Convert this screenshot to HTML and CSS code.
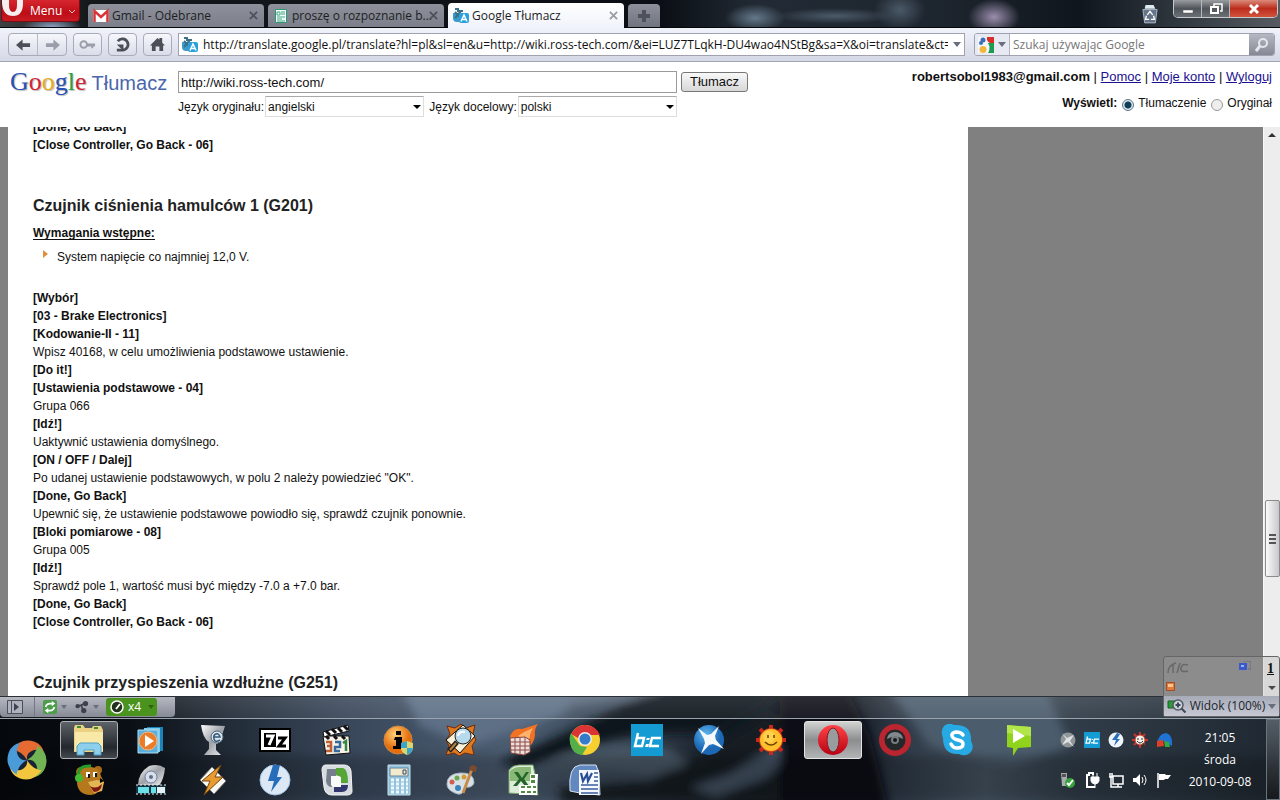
FILE: index.html
```html
<!DOCTYPE html>
<html lang="pl">
<head>
<meta charset="utf-8">
<title>Google Tłumacz</title>
<link rel="stylesheet" href="styles.css">
</head>
<body>
<svg class="defs" width="0" height="0" aria-hidden="true">
  <defs>
    <symbol id="translate" viewBox="0 0 16 16"><path d="M0 5h11v9H4a4 4 0 0 1-4-4z" fill="#3a9cc8"/><path d="M2 1h3v2h5M2 4l5 5M8 3L2 10" stroke="#3c7088" stroke-width="2" fill="none"/><rect x="6" y="5" width="10" height="10" rx="2" fill="#2aa0de"/><path d="M8 13.500 11 7l3 6.500M9 11.500h4" stroke="#fff" stroke-width="1.500" fill="none"/></symbol>
    <symbol id="close" viewBox="0 0 10 10"><path d="M1 1l8 8M9 1l-8 8" stroke="currentColor" stroke-width="2" fill="none"/></symbol>
    <symbol id="bc" viewBox="0 0 32 32"><path fill="#159bd3" d="M0 0h32v32H0z"/><path d="M7 9L4 22h7l2-8H6M30 14h-9l-2 8h9" fill="none" stroke="#fff" stroke-width="2.500"/><path d="M16 14h3l-1 2h-3zM15 20h3l-1 3h-3z" fill="#fff"/></symbol>
    <radialGradient id="orange" cx=".4" cy=".3"><stop offset="0" stop-color="#ffd37a"/><stop offset="1" stop-color="#e66d0c"/></radialGradient>
    <radialGradient id="ball" cx=".4" cy=".3"><stop offset="0" stop-color="#5db4ee"/><stop offset="1" stop-color="#1c68b4"/></radialGradient>
    <linearGradient id="red" x2="0" y2="1"><stop offset="0" stop-color="#ff4548"/><stop offset="1" stop-color="#b80012"/></linearGradient>
    <linearGradient id="silver" x2="1" y2="1"><stop offset="0" stop-color="#fff"/><stop offset=".5" stop-color="#9da2a8"/><stop offset="1" stop-color="#f4f4f4"/></linearGradient>
    <linearGradient id="sky"><stop offset="0" stop-color="#05080c"/><stop offset=".1" stop-color="#0a0f15"/><stop offset=".18" stop-color="#222c38"/><stop offset=".27" stop-color="#39475a"/><stop offset=".4" stop-color="#4b5c70"/><stop offset=".5" stop-color="#34414f"/><stop offset=".57" stop-color="#141a22"/><stop offset=".66" stop-color="#10151b"/><stop offset=".7" stop-color="#2d3845"/><stop offset=".77" stop-color="#44525f"/><stop offset=".84" stop-color="#303c48"/><stop offset="1" stop-color="#1f2831"/></linearGradient>
    <filter id="soft" x="-10%" y="-50%" width="120%" height="200%"><feGaussianBlur stdDeviation="5"/></filter>
  </defs>
</svg>

<header class="titlebar">
  <button class="menu"><svg class="menu-o" viewBox="0 0 22 16"><path d="M0 0h7v5q0 7 4 7t4-7V0h6v3q0 13-10 13T0 3z" fill="#f4eeee"/></svg>Menu<svg class="chev" viewBox="0 0 8 5"><path d="M1 1l3 3 3-3" fill="none" stroke="#f5c5c7"/></svg></button>
  <nav class="tabs">
    <div class="tab"><svg class="ic16" viewBox="0 0 16 16"><path fill="#fff" d="M0 2h16v12H0z"/><path d="M1.500 14V3L8 9l6.500-6v11" fill="none" stroke="#d8353a" stroke-width="2.500"/></svg><span>Gmail - Odebrane</span><button aria-label="Zamknij kartę"><svg viewBox="0 0 10 10"><use href="#close"/></svg></button></div>
    <div class="tab"><svg class="ic16" viewBox="0 0 16 16"><path fill="#f5fff9" stroke="#2e9575" d="M2.500 1.500h11v13h-11z"/><path d="M4 4h3v3H4zM8 4h4M8 6h4M4 9h8M4 11h5M4 13h8" fill="none" stroke="#3ba483"/></svg><span>proszę o rozpoznanie b...</span><button aria-label="Zamknij kartę"><svg viewBox="0 0 10 10"><use href="#close"/></svg></button></div>
    <div class="tab active"><svg class="ic16"><use href="#translate"/></svg><span>Google Tłumacz</span><button aria-label="Zamknij kartę"><svg viewBox="0 0 10 10"><use href="#close"/></svg></button></div>
    <button class="newtab" aria-label="Nowa karta"><svg viewBox="0 0 12 12"><path d="M4 0h4v4h4v4H8v4H4V8H0V4h4z" fill="#4d525c"/></svg></button>
  </nav>
  <button class="trash" aria-label="Zamknięte karty"><svg viewBox="0 0 18 22"><path d="M4 1h9l2 4H3z" fill="#dcebf0"/><path d="M1 6h16l-2 15H3z" fill="#66748a" stroke="#b4c0d0"/><path d="M6 12l3-4 3 4M13 13l1 4h-4M8 17H4l1-4" fill="none" stroke="#fff" stroke-width="1.500"/></svg></button>
  <div class="winbtns">
    <button aria-label="Minimalizuj"><svg viewBox="0 0 14 12"><path d="M2 7h10v3H2z" fill="#fff" stroke="#50555b" stroke-width=".5"/></svg></button>
    <button aria-label="Przywróć"><svg viewBox="0 0 14 12"><path d="M5 3V1h8v7h-2" fill="none" stroke="#fff" stroke-width="1.500"/><path d="M2 4h7v6H2z" fill="none" stroke="#fff" stroke-width="2"/></svg></button>
    <button class="x" aria-label="Zamknij"><svg viewBox="0 0 14 12"><path d="M3 2l8 8M11 2l-8 8" stroke="#fff" stroke-width="3"/></svg></button>
  </div>
</header>

<div class="toolbar">
  <div class="pair"><button aria-label="Wstecz"><svg viewBox="0 0 16 12"><path d="M0 6l7-6v4h8v4H7v4z" fill="#4b4f58"/></svg></button><button aria-label="Dalej"><svg viewBox="0 0 16 12"><path d="M16 6L9 0v4H1v4h8v4z" fill="#9a9eaa"/></svg></button></div>
  <button class="tb" aria-label="Różdżka"><svg viewBox="0 0 18 12"><path d="M8 5h9v3h-2v2h-2V8H8" fill="#9a9eaa"/><circle cx="5" cy="6" r="3.500" fill="none" stroke="#9a9eaa" stroke-width="2"/></svg></button>
  <button class="tb" aria-label="Odśwież"><svg viewBox="0 0 16 16"><path d="M3 4.500A6 6 0 1 1 8 14H2" fill="none" stroke="#4b4f58" stroke-width="3"/><path d="M2 8h7v7z" fill="#4b4f58"/></svg></button>
  <button class="tb" aria-label="Strona startowa"><svg viewBox="0 0 16 16"><path d="M8 1l2 2V1h3v5l3 3h-2v6h-4v-5H6v5H2V9H0z" fill="#4b4f58"/></svg></button>
  <div class="address"><svg class="ic16"><use href="#translate"/></svg><input aria-label="Adres" value="http://translate.google.pl/translate?hl=pl&amp;sl=en&amp;u=http://wiki.ross-tech.com/&amp;ei=LUZ7TLqkH-DU4wao4NStBg&amp;sa=X&amp;oi=translate&amp;ct=result"><i class="tri"></i></div>
  <div class="search"><button class="engine" aria-label="Wyszukiwarka"><svg class="ic16" viewBox="0 0 16 16"><path fill="#f4f6fa" d="M0 0h16v16H0z"/><path fill="#d92f2b" d="M9 0h7v6h-4q-4-2-3-6z"/><path fill="#1d9c50" d="M10 6h6v10h-6q3-5 0-10z"/><circle cx="5" cy="3" r="2.500" fill="#3c6fb8"/><circle cx="3" cy="6" r="2" fill="#3c6fb8"/><circle cx="5" cy="12.500" r="3.500" fill="#f3b73e"/></svg><i class="tri"></i></button><input aria-label="Szukaj" placeholder="Szukaj używając Google"><button class="go" aria-label="Szukaj"><svg viewBox="0 0 14 14"><circle cx="8" cy="5" r="4" fill="none" stroke="#e5e7ec" stroke-width="2"/><path d="M5 8l-4 5" stroke="#e5e7ec" stroke-width="3"/></svg></button></div>
</div>

<form class="gbar">
  <a class="logo" href="#"><span class="goog"><b class="c1">G</b><b class="c2">o</b><b class="c3">o</b><b class="c1">g</b><b class="c4">l</b><b class="c2">e</b></span><span class="tlum">Tłumacz</span></a>
  <div class="fields">
    <div class="frow"><input class="url" aria-label="Adres strony" value="http://wiki.ross-tech.com/"><button type="button" class="go-tr">Tłumacz</button></div>
    <div class="frow langs">
      <label for="sl">Język oryginału:</label><span class="sel"><select id="sl"><option>angielski</option></select></span>
      <label for="tl" class="second">Język docelowy:</label><span class="sel"><select id="tl"><option>polski</option></select></span>
    </div>
  </div>
  <div class="account">
    <div class="links"><b>robertsobol1983@gmail.com</b> | <a href="#">Pomoc</a> | <a href="#">Moje konto</a> | <a href="#">Wyloguj</a></div>
    <div class="view"><b>Wyświetl:</b><input type="radio" name="v" id="v1" checked><label for="v1">Tłumaczenie</label><input type="radio" name="v" id="v2"><label for="v2">Oryginał</label></div>
  </div>
</form>

<main class="viewport">
  <article class="page">
    <div class="scrolled">
    <p><b>[Done, Go Back]</b><br><b>[Close Controller, Go Back - 06]</b></p>
    <h3>Czujnik ciśnienia hamulców 1 (G201)</h3>
    <p class="req"><b>Wymagania wstępne:</b></p>
    <ul><li>System napięcie co najmniej 12,0 V.</li></ul>
    <p><b>[Wybór]</b><br><b>[03 - Brake Electronics]</b><br><b>[Kodowanie-II - 11]</b><br>Wpisz 40168, w celu umożliwienia podstawowe ustawienie.<br><b>[Do it!]</b><br><b>[Ustawienia podstawowe - 04]</b><br>Grupa 066<br><b>[Idź!]</b><br>Uaktywnić ustawienia domyślnego.<br><b>[ON / OFF / Dalej]</b><br>Po udanej ustawienie podstawowych, w polu 2 należy powiedzieć "OK".<br><b>[Done, Go Back]</b><br>Upewnić się, że ustawienie podstawowe powiodło się, sprawdź czujnik ponownie.<br><b>[Bloki pomiarowe - 08]</b><br>Grupa 005<br><b>[Idź!]</b><br>Sprawdź pole 1, wartość musi być między -7.0 a +7.0 bar.<br><b>[Done, Go Back]</b><br><b>[Close Controller, Go Back - 06]</b></p>
    <h3>Czujnik przyspieszenia wzdłużne (G251)</h3>
    </div>
  </article>
  <div class="scrollbar"><i class="arr up"></i><div class="above"></div><div class="thumb"><i></i><i></i><i></i></div><div class="below"></div><i class="arr down"></i></div>
</main>

<footer class="desk">
  <svg class="wall" viewBox="0 0 1280 104" preserveAspectRatio="none" aria-hidden="true">
    <path fill="url(#sky)" d="M0 0h1280v104H0z"/>
    <g filter="url(#soft)">
      <path fill="#5d7086" d="M400-10h200l-40 30-90 30-50-20z"/>
      <path fill="#5a6b7e" d="M590-20h90l-30 20-90 12z"/>
      <path fill="#10161e" d="M500 66l80-36 60-30 80-20 60 20-60 36-80 2-60 14-60 20z"/>
      <path fill="#4a5866" d="M560 60l60-10 50 4 20 14-40 12-60-8-50 6z"/>
      <path fill="#151b23" d="M560 92l90-6 60-30 60-40 30 90H560z"/>
      <path fill="#435162" d="M690 92l40-14 50-30 16 4-30 30-50 18z"/>
      <path fill="#0c1117" d="M780-20l60 0 30 60 20 80H780z"/>
      <path fill="#4c5c6c" d="M880-20h160l30 70-60 20-80-20z"/>
    </g>
    <path fill="#000" opacity=".2" d="M0 60h1280v44H0z" filter="url(#soft)"/>
  </svg>
  <div class="status">
    <div class="sleft">
      <button class="panel" aria-label="Panele"><svg viewBox="0 0 16 14"><path d="M.5.500h15v13H.5zM4.500 1v12" fill="#aeb2bd" stroke="#4b4f5c"/><path d="M7 3l5 4-5 4z" fill="#3f4453"/></svg></button>
      <button aria-label="Synchronizuj"><svg viewBox="0 0 16 16"><rect width="16" height="16" rx="2" fill="#4c9d4a"/><path d="M3 8q1-4 5-4h3M13 8q-1 4-5 4H5" fill="none" stroke="#fff" stroke-width="2"/><path d="M10 1l4 3-4 3zM6 9l-4 3 4 3z" fill="#fff"/></svg><i class="tri"></i></button>
      <button aria-label="Unite"><svg viewBox="0 0 16 16"><path d="M2 7l5-1 6-3M7 6l3 7" stroke="#3d414b" stroke-width="2"/><circle cx="3" cy="7" r="2.500" fill="#3d414b"/><circle cx="12" cy="4" r="3" fill="#3d414b"/><circle cx="10" cy="12" r="3" fill="#3d414b"/></svg><i class="tri"></i></button>
      <button class="turbo"><svg viewBox="0 0 14 14"><circle cx="7" cy="7" r="6" fill="#20321c" stroke="#fff" stroke-width="1.500"/><path d="M6 9l4-5" stroke="#fff" stroke-width="2"/></svg>x4<i class="tri"></i></button>
    </div>
    <div class="zoompanel">
      <div class="ghost"><svg viewBox="0 0 24 14"><path d="M2 12Q2 4 10 2M7 12V4M11 12L14 2M22 4q-6-2-7 3t7 3" fill="none" stroke="#686868" stroke-width="1.500"/></svg><svg class="g2" viewBox="0 0 12 10"><path d="M4 0h8v8H9" fill="none" stroke="#656b88"/><rect y="2" width="8" height="7" fill="#3b59c8"/><rect x="2" y="4" width="3" height="2" fill="#91b5ff"/></svg><span>1</span><svg class="g3" viewBox="0 0 10 9"><rect x=".5" y=".5" width="8" height="8" fill="#e27a39" stroke="#9d5129"/><path d="M2 2h5v3H2z" fill="#ffc396"/></svg></div>
      <button class="zoom"><svg viewBox="0 0 20 16"><path fill="#2b9a3b" stroke="#1c5d28" d="M1 3h8v7H1z"/><circle cx="11" cy="7" r="5" fill="#cad4dc" stroke="#555b66" stroke-width="1.500"/><path d="M8.500 7h5M11 4.500v5M14.500 10.500l4 4" stroke="#3f4654" stroke-width="2"/></svg>Widok (100%)<i class="tri"></i></button>
    </div>
  </div>
  <div class="taskbar">
    <button class="start" aria-label="Start"><svg viewBox="0 0 48 48"><circle cx="24" cy="24" r="20" fill="#182434"/><path d="M9 13Q18 0 32 5q8 3 10 12-8-6-14-2-5 3-4 9-5-9-15-11z" fill="#e56b32"/><path d="M35 9q13 9 8 23-3 8-12 10 6-8 2-14-3-5-9-4 9-5 11-15z" fill="#72b353"/><path d="M39 35Q30 48 16 43q-8-3-10-12 8 6 14 2 5-3 4-9 5 9 15 11z" fill="#f2c63e"/><path d="M13 39Q0 30 5 16q3-8 12-10-6 8-2 14 3 5 9 4-9 5-11 15z" fill="#4a9bd8"/></svg></button>
    <div class="apps">
      <button class="lit" aria-label="Eksplorator"><svg viewBox="0 0 32 32"><path d="M1 4l1-3h8l2 3h7l1-2h8l2 4v22H1z" fill="#e9d284"/><path d="M2 8h28v19H2z" fill="#f9e9a9"/><path d="M4 3h4M21 4h4" stroke="#3b8c39" stroke-width="2"/><path d="M4 31V22l3-3h18l3 3v9h-7v-5H11v5z" fill="#8ed0ec" stroke="#4a9dc7"/></svg></button>
      <button aria-label="Media Player"><svg viewBox="0 0 32 32"><path d="M12 3h16v24H12z" fill="#1d83b6"/><path d="M9 4h16v24H9z" fill="#7dc8ec"/><path d="M3 6h20v23H3z" fill="#5cafdc" stroke="#a7def3"/><circle cx="13" cy="17" r="9" fill="#ea7d29" stroke="#f8b779"/><path d="M10 11l9 6-9 6z" fill="#fff"/></svg></button>
      <button aria-label="Puchar"><svg viewBox="0 0 32 32"><path d="M4 1l24 1-4 12q-2 6-5 6v6l5 5H7l5-6v-7Q6 15 4 1z" fill="url(#silver)"/><circle cx="20" cy="13" r="6" fill="#dce4e9" stroke="#4b6579"/><path d="M17 13h6q-1-4-4-3t-2 5 6 1" stroke="#31597a" stroke-width="1.500" fill="none"/></svg></button>
      <button aria-label="7-Zip"><svg viewBox="0 0 32 32"><path d="M1 5h30v22H1z" fill="#fff" stroke="#000" stroke-width="2"/><path d="M5 9h12v14H5z"/><path d="M7 12h7l-4 9" stroke="#fff" stroke-width="3" fill="none"/><path d="M19 14h7l-6 8h7" stroke="#000" stroke-width="3" fill="none"/></svg></button>
      <button aria-label="Media Player Classic"><svg viewBox="0 0 32 32"><path d="M2 12h26l1 17-24 2z" fill="#f7f3e8" stroke="#111"/><path d="M2 8l25-7 1 6L3 13z" fill="#fff" stroke="#111"/><path d="M5 7l4 4M11 5l4 4M17 4l4 4M23 2l4 4M5 12l3 3M13 12l3 3M21 12l3 3" stroke="#111" stroke-width="3"/><g fill="none" stroke-width="2.500"><path d="M5 18h5v4H6h4v5H5" stroke="#bd6036"/><path d="M14 18h5v5h-5v4h5" stroke="#38699c"/><path d="M22 19l3-2v10" stroke="#328745"/></g></svg></button>
      <button aria-label="Informacje"><svg viewBox="0 0 32 32"><circle cx="15" cy="16" r="14" fill="url(#orange)" stroke="#ca8a43"/><path d="M12 13h7v9h3v3H10v-3h3v-6h-2zM13 7h5v4h-5z"/><path d="M18 19l6-2 6 2v6q-2 5-6 6-5-2-6-6z" fill="#ded46e"/><path d="M18 19l6-2v7h-6zM24 24h6q-1 5-6 7z" fill="#38a5cc"/></svg></button>
      <button aria-label="Przeglądarka obrazów"><svg viewBox="0 0 32 32"><path d="M2 2l8 2 6-4 5 4 9-3-2 9 3 6-4 6 2 9-9-2-6 3-5-3-8 2 3-9-3-6 4-6z" fill="#df7920" stroke="#6e2b12"/><path d="M1 16L18 1l12 11-15 17z" fill="#f9f1d7" stroke="#111"/><circle cx="18" cy="12" r="8" fill="#b7dbed" stroke="#222"/><path d="M13 12q1-5 7-4" stroke="#fff" stroke-width="2" fill="none"/><path d="M12 18L4 27" stroke="#222" stroke-width="5"/><path d="M11 19l-6 7" stroke="#bc7e3b" stroke-width="2"/></svg></button>
      <button aria-label="Zapora"><svg viewBox="0 0 32 32"><path d="M3 12Q7 3 15 5q6-2 16-5-4 5-3 11-1 9-7 12L5 18z" fill="#f27223"/><path d="M11 12q7-5 15-8-4 7-3 10-4 3-12-2z" fill="#ffb16e"/><path d="M3 14l15-1 5 3v12l-6 3-13-2z" fill="#efdfdc" stroke="#83443d"/><path d="M3 18h20M3 22h20M4 26h18M8 14v16M13 14v16M18 13v17" stroke="#8d4a45"/></svg></button>
      <button aria-label="Chrome"><svg viewBox="0 0 32 32"><circle cx="16" cy="16" r="15" fill="#f6cf31"/><path d="M2 10Q8 0 17 1q10 1 14 10H16L9 14z" fill="#da3435"/><path d="M2 9l9 13 7 1-5 8Q3 30 1 19 0 13 2 9z" fill="#54af48"/><circle cx="16" cy="15" r="7" fill="#eee"/><circle cx="16" cy="15" r="5.500" fill="#347cc9"/></svg></button>
      <button aria-label="bc"><svg><use href="#bc"/></svg></button>
      <button aria-label="Wentylator"><svg viewBox="0 0 32 32"><circle cx="16" cy="16" r="15" fill="url(#ball)"/><path d="M5 4l9 7 4-1 8-8-4 10 1 4 8 9-11-5-4 1-8 9 4-11-1-4z" fill="#f5f9fb"/></svg></button>
      <button aria-label="Słońce"><svg viewBox="0 0 32 32"><path d="M16 1v30M1 16h30M5 5l22 22M27 5L5 27" stroke="#c9281d" stroke-width="4"/><circle cx="16" cy="16" r="12" fill="#d83a1c"/><circle cx="16" cy="16" r="11" fill="#ffc02b"/><circle cx="14" cy="13" r="6" fill="#ffe174" opacity=".5"/><path d="M13 11v3M19 11v3M10 18q6 6 12 0" stroke="#694000" stroke-width="1.500" fill="none"/></svg></button>
      <button class="lit opera" aria-label="Opera"><svg viewBox="0 0 32 32"><ellipse cx="16" cy="16" rx="15" ry="15" fill="url(#red)"/><ellipse cx="16" cy="16" rx="6" ry="12" fill="#999c9e" stroke="#8d171c"/></svg></button>
      <button aria-label="Kamera"><svg viewBox="0 0 32 32"><circle cx="16" cy="16" r="16" fill="#bb252f"/><circle cx="16" cy="16" r="10.500" fill="#25282b"/><path d="M8 15a8 7 0 0 1 16 0q-8-5-16 0z" fill="#82898c"/><circle cx="16" cy="16" r="4" fill="#777d80"/><circle cx="16" cy="16" r="2" fill="#161819"/></svg></button>
      <button aria-label="Skype"><svg viewBox="0 0 32 32"><path d="M3 2q5-4 10-1 18-1 17 16 4 7-1 12-5 4-11 1Q2 31 2 14-1 7 3 2z" fill="#27a9e4"/><path d="M22 11q-2-3-7-3-5 1-4 4 1 3 6 4t5 4q0 4-6 4-4 0-6-4" fill="none" stroke="#fff" stroke-width="3.500" stroke-linecap="round"/></svg></button>
      <button aria-label="Odtwarzacz"><svg viewBox="0 0 32 32"><path d="M4 1l24 2v20l-13 1-5 8V24l-6-1z" fill="#8fd41a"/><path d="M4 1l24 2v9L4 9z" fill="#b1e54a"/><path d="M10 5l12 7-12 7z" fill="#fff"/></svg></button>
      <button aria-label="BearShare"><svg viewBox="0 0 32 32"><circle cx="8" cy="8" r="5" fill="#a76918"/><circle cx="25" cy="6" r="4" fill="#a76918"/><path d="M6 8q6-8 16-4 5 2 6 8l3 6q-3 12-13 13Q5 31 4 19z" fill="#b5781c"/><path d="M15 18l9-2 7 2-2 9-8 2z" fill="#e3b655"/><path d="M17 22q6 4 12-2-1 8-8 8z" fill="#7b1513"/><path d="M27 14l4 3-4 2z"/><path d="M15 8v5M22 8v5" stroke="#fff" stroke-width="4"/><path d="M16 10v4M23 9v4" stroke="#111" stroke-width="2"/><path d="M6 15Q3 1 18 2" fill="none" stroke="#259b28" stroke-width="3"/><circle cx="6" cy="14" r="4" fill="#42ba34"/></svg></button>
      <button aria-label="Nagrywanie"><svg viewBox="0 0 32 32"><path d="M3 21Q3 9 14 2q9-3 16 2-1 11-6 18z" fill="url(#silver)"/><circle cx="16" cy="13" r="6" fill="#d8dfec" stroke="#7180a0"/><circle cx="16" cy="13" r="2" fill="#617086"/><path d="M1 21h30v9H1z" fill="#143342"/><path d="M3 23h11v6H3zM16 23h5v6h-5z" fill="#6ce0e8"/><path d="M22 23h8v6h-8z" fill="#e4f0f5"/><path d="M1 21h30M1 30h30" stroke="#eee" stroke-dasharray="2 2"/></svg></button>
      <button aria-label="Winamp"><svg viewBox="0 0 32 32"><path d="M15 3l14 14-12 13L3 16z" fill="#faf8f2" stroke="#767676"/><path d="M24 1L5 17h8L7 31l19-18h-8z" fill="#e79b31" stroke="#78470e"/></svg></button>
      <button aria-label="Daemon Tools"><svg viewBox="0 0 32 32"><circle cx="16" cy="16" r="15" fill="#dce8f6" stroke="#a6c6e7"/><path d="M14 1h7l-3 12h5L12 28l3-11H9z" fill="#286dba"/></svg></button>
      <button aria-label="Pulpit"><svg viewBox="0 0 32 32"><path d="M5 1h18q6 0 7 6l1 20q0 4-5 4H11q-7 0-8-8L1 6q0-5 4-5z" fill="#d7dce0" stroke="#f4f4f4"/><path d="M6 5h9v7l-4 2v9q-5 0-6-6z" fill="#777e8b"/><path d="M15 4h7q5 1 5 15h-7v-6l-5-2z" fill="#55a538"/><path d="M20 21h7q0 7-6 7h-8v-5z" fill="#33376e"/><path d="M10 12h8l2 2v9h-8l-2-2z" fill="#f9fbfb"/></svg></button>
      <button aria-label="Kalkulator"><svg viewBox="0 0 32 32"><path d="M5 1h22v30H5z" fill="#94c3dd" stroke="#c5e2ed"/><path d="M7 4h18v8H7z" fill="#f2eacc" stroke="#6587a0"/><path d="M20 6h3v4h-3z" fill="none" stroke="#374963"/><path d="M8 16h17M8 20h17M8 24h17M8 28h17" stroke="#edf8fd" stroke-width="3" stroke-dasharray="3 2"/></svg></button>
      <button aria-label="Paint"><svg viewBox="0 0 32 32"><path d="M2 20Q2 10 15 9q14-1 14 10-2 5-8 4-2 0-2 4-3 5-9 2Q2 26 2 20z" fill="#d8e1e6" stroke="#a6b8c3"/><circle cx="7" cy="18" r="2.500" fill="#cf5f52"/><circle cx="12" cy="14" r="2.500" fill="#68a94a"/><circle cx="19" cy="13" r="2.500" fill="#d69b32"/><circle cx="13" cy="24" r="3" fill="#3b81bb"/><path d="M27 5L18 29" stroke="#c78b4b" stroke-width="3"/><path d="M24 6l1-4 3-1 4 2-1 5z" fill="#7a4932"/></svg></button>
      <button aria-label="Excel"><svg viewBox="0 0 32 32"><path d="M2 6q4-5 10-5h14l2 9 3 21L2 29z" fill="#deedda" stroke="#77a667"/><path d="M3 7q4-4 10-4h11v14H3z" fill="#8ab877"/><path d="M7 8h4l4 6 4-6h3l-5 7 5 7h-4l-4-5-4 5H6l6-7z" fill="#22652a"/><path d="M23 10h8l-1 21H12V21h11z" fill="#fff"/><path d="M14 22h4v2h-4zM20 22h4v2h-4zM26 22h3v2h-3zM14 27h4v2h-4zM20 27h4v2h-4zM26 27h3v2h-3zM24 11h4v3h-4zM24 16h4v3h-4z" fill="#528a3f"/></svg></button>
      <button aria-label="Word"><svg viewBox="0 0 32 32"><path d="M1 27Q-1 2 11 1h16l3 8 1 22-20-2z" fill="#6188bf" stroke="#d5e0ef"/><path d="M10 6h20v25H10z" fill="#f5f8fd"/><path d="M12 9l2 8 4-7 1 7 4-8" fill="none" stroke="#294f94" stroke-width="2.200"/><path d="M25 9h4M25 13h4M25 17h4M12 21h17M12 25h17M12 29h17" stroke="#375c9a" stroke-width="1.500"/></svg></button>
    </div>
    <div class="tray">
      <svg viewBox="0 0 16 16"><circle cx="8" cy="8" r="7.500" fill="#919699"/><path d="M2 1l5 5 7-3-4 6 4 6-6-5-6 3 4-6z" fill="#dfe1e2"/></svg>
      <svg><use href="#bc"/></svg>
      <svg viewBox="0 0 16 16"><circle cx="8" cy="8" r="7.500" fill="#eff5fa"/><path d="M9 1L4 8h4l-2 6 6-7H9l3-5z" fill="#2a6fbb"/></svg>
      <svg viewBox="0 0 16 16"><path d="M8 0v16M0 8h16M2 2l11 11M13 2L2 13" stroke="#c6372c" stroke-width="2"/><circle cx="8" cy="8" r="5" fill="#f2efe5" stroke="#d33129"/><path d="M5 7h2M9 7h2M5 9q3 4 6 0M11 11v5M15 11v5M11 13h4" stroke="#333" fill="none"/></svg>
      <svg viewBox="0 0 16 16"><path d="M1 12Q2 2 10 1q5 1 6 8v5l-8-5z" fill="#1e74d5"/><path d="M1 9l6-1 1 6-7 1z" fill="#df3f24"/><path d="M8 9l5 1 1 5h-5z" fill="#36a742"/></svg>
      <svg viewBox="0 0 16 16"><path d="M1 1h6v13H2z" fill="#a6abae"/><path d="M2 2h4v3H2z" fill="#555"/><circle cx="10" cy="11" r="5" fill="#32a43a"/><path d="M7 11l2 2 4-5" stroke="#fff" stroke-width="2" fill="none"/></svg>
      <svg viewBox="0 0 16 16"><path d="M9 3V1H5v2H3v12h8" fill="none" stroke="#fff" stroke-width="2"/><path d="M7 5h8v4q-1 3-4 3t-4-3zM9 1v4M13 1v4M11 12v4" fill="#fff" stroke="#fff"/></svg>
      <svg viewBox="0 0 16 16"><path d="M5 4h10v8H5zM10 12v3M6 15h8M2 1v4M4 1v4M1 5h4M3 5v10h4" fill="none" stroke="#fff" stroke-width="1.500"/></svg>
      <svg viewBox="0 0 16 16"><path d="M1 6h3l4-4v12l-4-4H1z" fill="#fff"/><path d="M10 5q2 3 0 6M12 3q4 5 0 10" stroke="#fff" fill="none"/></svg>
      <svg viewBox="0 0 16 16"><path d="M2 1v15" stroke="#fff" stroke-width="1.500"/><path d="M3 2h6l1 1h5l-3 4H9L8 8H3z" fill="#fff"/></svg>
    </div>
    <time class="clock"><span>21:05</span><span>środa</span><span>2010-09-08</span></time>
    <button class="peek" aria-label="Pokaż pulpit"></button>
  </div>
</footer>
</body>
</html>
```
FILE: styles.css
```css
* { box-sizing: border-box; }
html, body { height: 100%; }
body {
  margin: 0;
  display: flex;
  flex-direction: column;
  overflow: hidden;
  font: 12px/18px "Liberation Sans", Arial, sans-serif;
  color: #111;
  background: #fff;
}
button, input, select { font: inherit; color: inherit; margin: 0; padding: 0; border: 0; background: none; }
button { display: flex; align-items: center; justify-content: center; }
svg { display: block; flex: none; }
.defs { position: absolute; }
.ic16 { width: 16px; height: 16px; }
.tri { width: 0; height: 0; border: 4px solid transparent; border-top: 5px solid #6a6e7c; border-bottom: 0; flex: none; }
.titlebar, .toolbar, .status, .clock { font-family: "Open Sans", "Noto Sans", sans-serif; }

.titlebar {
  display: flex;
  height: 28px;
  flex: none;
  border-bottom: 1px solid #05070a;
  background:
    radial-gradient(ellipse 26px 18px at 994px 17px, #9c8eae, transparent),
    radial-gradient(ellipse 30px 14px at 755px 18px, #64788a, transparent),
    radial-gradient(ellipse 60px 8px at 835px 16px, #4c5a69, transparent),
    radial-gradient(ellipse 26px 20px at 900px 10px, #4a5866, transparent),
    radial-gradient(ellipse 30px 12px at 52px 28px, #97acd0, transparent),
    linear-gradient(90deg, #3e4143 0, #15181b 90px, #0b0f15 660px, #222b35 760px, #1d252e 940px, #10161d 1080px, #30383f 1180px, #555b61 100%);
}
.menu {
  width: 79px; height: 22px; margin-left: 1px; gap: 6px;
  justify-content: flex-start; align-items: flex-start;
  color: #fff; border: 1px solid #7c0b12; border-top: 0; border-radius: 0 0 4px 4px;
  background: linear-gradient(#d6262e, #bd0d17 60%, #c71b23);
  line-height: 22px;
}
.menu-o { width: 22px; height: 16px; }
.chev { width: 8px; height: 5px; margin-top: 9px; }
.tabs { display: flex; align-items: flex-end; gap: 4px; margin-left: 8px; flex: 1; }
.tab {
  width: 176px; height: 23px; display: flex; align-items: center; padding: 0 6px 0 5px; gap: 3px;
  border-radius: 4px 4px 0 0; color: #1c1e24;
  background: linear-gradient(#8e919b, #7c7f89);
}
.tab span { flex: 1; min-width: 0; white-space: nowrap; }
.tab button { color: #4d515b; }
.tab button svg { width: 9px; height: 9px; }
.tab.active { height: 25px; background: linear-gradient(#fff, #f1f3fb); margin-bottom: -1px; }
.tab.active button { color: #9a9ca4; }
.newtab { width: 32px; height: 23px; border-radius: 4px 4px 0 0; background: linear-gradient(#8e919b, #70747e); }
.newtab svg { width: 12px; height: 12px; }
.trash { width: 18px; height: 28px; margin-right: 14px; }
.trash svg { width: 16px; height: 22px; }
.winbtns { display: flex; width: 105px; height: 18px; margin-right: 2px; border: 1px solid #c6c9cc; border-top: 0; border-radius: 0 0 5px 5px; overflow: hidden; }
.winbtns button { flex: 1; background: linear-gradient(#9a9da0, #50555b 50%, #6b7076); border-right: 1px solid #b6b9bc; }
.winbtns .x { flex: 0 0 47px; border: 0; background: linear-gradient(#db8b7b, #bc2c1c 50%, #d1543c); }
.winbtns svg { width: 14px; height: 12px; }

.toolbar {
  display: flex; align-items: center; height: 34px; flex: none; gap: 6px; padding: 0 5px 0 8px;
  background: linear-gradient(#f1f3fb, #d5d8e6); border-bottom: 1px solid #a2a5b0;
}
.pair, .tb { height: 23px; border: 1px solid #a8abb8; border-radius: 4px; background: linear-gradient(#f6f7fc, #dadde9); }
.pair { display: flex; width: 59px; }
.pair button { flex: 1; }
.pair button + button { border-left: 1px solid #b7bac6; }
.pair svg { width: 15px; height: 12px; }
.tb { width: 29px; }
.tb svg { width: 17px; height: 15px; }
.address { display: flex; flex: 1; align-items: center; height: 23px; padding: 0 3px; gap: 5px; border: 1px solid #a0a3af; background: #fff; }
.address input { flex: 1; min-width: 0; height: 20px; color: #111; }
.search { display: flex; width: 301px; height: 23px; margin-left: 3px; border: 1px solid #a0a3af; border-radius: 3px; background: #fff; overflow: hidden; }
.engine { width: 35px; gap: 4px; background: #e8eaf3; border-right: 1px solid #b3b6c2; }
.search input { flex: 1; min-width: 0; padding-left: 3px; }
.search input::placeholder { color: #777; opacity: 1; }
.go { width: 25px; background: linear-gradient(#b5b8c2, #858995); }
.go svg { width: 14px; height: 14px; }

.gbar { display: flex; height: 65px; flex: none; background: #fff; padding: 0 8px 0 10px; }
.logo { display: flex; align-items: baseline; width: 168px; gap: 5px; padding-top: 4px; text-decoration: none; color: #4a66ad; line-height: 32px; }
.goog { font-family: "Liberation Serif", serif; font-size: 26px; }
.goog b { font-weight: 400; text-shadow: 1px 1px 1px #bbb; }
.c1 { color: #2c51b5; } .c2 { color: #cf2535; } .c3 { color: #e5ad16; } .c4 { color: #2b9f43; }
.tlum { font-family: "Liberation Sans", sans-serif; font-size: 20px; }
.fields { padding-top: 9px; }
.frow { display: flex; gap: 4px; align-items: center; }
.url { width: 499px; height: 22px; border: 1px solid #9b9b9b; padding-left: 2px; font-size: 13px; }
.go-tr { width: 67px; height: 20px; border: 1px solid #777; border-radius: 3px; background: linear-gradient(#f8f8f8, #d7d7d7); font-size: 13px; }
.langs { width: 499px; margin-top: 3px; gap: 1px; }
.second { margin-left: 4px; }
.sel { position: relative; display: block; flex: 1; }
.sel select { width: 100%; height: 21px; padding-left: 2px; appearance: none; border: 1px solid #ddd; border-top-color: #aaa; background: #fff; display: block; }
.sel::after { content: ""; position: absolute; right: 3px; top: 9px; border: 4px solid transparent; border-top-color: #000; border-bottom: 0; pointer-events: none; }
.account { margin-left: auto; text-align: right; padding-top: 6px; white-space: nowrap; }
.links { font-size: 13px; }
.links a { color: #1a1191; }
.view { display: flex; align-items: center; justify-content: flex-end; margin-top: 8px; }
.view input { appearance: none; width: 12px; height: 12px; border: 1px solid #999; border-radius: 50%; background: #eee; margin: 4px 4px 0 5px; }
.view input:checked { border-color: #66757f; background: radial-gradient(#123d57 0 3px, #d5e8f0 4px); }

.viewport { display: flex; flex: 1; min-height: 0; padding-left: 8px; background: #808080; }
.page { width: 960px; max-width: 76%; background: #fff; overflow: hidden; padding-left: 25px; }
.scrolled { margin-top: -9px; }
.page p { margin: 0; }
.page h3 { margin: 0 0 6px; font-size: 16px; line-height: 22px; color: #222; }
.page p + h3 { margin-top: 41px; }
.page .req { line-height: 20px; }
.req b { display: inline-block; line-height: 12px; border-bottom: 1px solid #111; }
.page ul { list-style: none; margin: 5px 0 23px; padding: 0; }
.page li { display: flex; gap: 9px; padding-left: 10px; }
.page li::before { content: ""; border: 4px solid transparent; border-left: 5px solid #dd9138; border-right: 0; height: 0; margin-top: 2px; }
.scrollbar { display: flex; flex-direction: column; align-items: center; width: 17px; margin-left: auto; background: #ededed; border-left: 1px solid #f8f8f8; }
.above { flex: 356; }
.below { flex: 101; }
.thumb { width: 15px; height: 77px; display: flex; flex-direction: column; align-items: center; justify-content: center; gap: 2px; border: 1px solid #8b8b8b; border-radius: 2px; background: linear-gradient(90deg, #fafafa, #c8c8cc); }
.thumb i { width: 7px; height: 2px; background: #555; }
.arr { border: 4px solid transparent; margin: 6px 0; }
.up { border-bottom-color: #333; border-top: 0; margin-bottom: 8px; }
.down { border-top-color: #222; border-bottom: 0; margin-top: 8px; }

.desk { position: relative; flex: none; background: #080c12; }
.wall { position: absolute; width: 100%; height: 100%; }
.status { position: relative; display: flex; justify-content: space-between; height: 23px; border-top: 1px solid #2b3036; border-bottom: 1px solid #9ba4ad; background: linear-gradient(#ffffff20, #ffffff10); }
.sleft { display: flex; align-items: center; gap: 7px; width: 175px; height: 20px; padding-left: 7px; border-radius: 0 0 4px 4px; background: linear-gradient(#b6b9c2, #868a95); }
.sleft button { gap: 3px; }
.sleft svg { width: 16px; height: 14px; }
.sleft .panel { width: 28px; height: 20px; justify-content: flex-start; border-right: 1px solid #747884; }
.sleft .tri { border-width: 4px 3px 0; }
.sleft .turbo { width: 51px; height: 18px; border-radius: 3px; color: #fff; background: #4a931e; }
.turbo .tri { border-top-color: #2f6212; margin-left: 4px; }
.zoompanel { position: absolute; right: 0; bottom: 1px; width: 117px; border: 1px solid #666; border-radius: 3px; background: #a8a8a84d; }
.ghost { display: grid; grid-template-columns: 1fr 12px 10px; column-gap: 16px; padding: 4px 2px 0; height: 39px; }
.ghost svg:first-child { width: 24px; height: 14px; }
.g2 { width: 12px; height: 10px; }
.g3 { width: 10px; height: 9px; }
.ghost span { font: bold 14px/16px "Liberation Serif", serif; text-decoration: underline; }
.zoom { width: 100%; height: 20px; gap: 3px; color: #20242c; background: linear-gradient(#a7abb8, #c6c9d3); }
.zoom svg { width: 20px; height: 16px; }

.taskbar { position: relative; display: flex; height: 81px; }
.start { width: 58px; padding-right: 4px; }
.start svg { width: 46px; height: 46px; }
.apps { display: grid; grid-template-columns: repeat(16, 62px); grid-template-rows: 41px 40px; align-items: center; justify-items: center; flex: 1; }
.apps button { width: 58px; height: 38px; border-radius: 3px; }
.apps svg { width: 32px; height: 32px; }
.lit { border: 1px solid #abb0b6; background: linear-gradient(#5d6269, #24282e 70%, #43484f); }
.apps .lit { border: 1px solid #abb0b6; }
.apps .opera { border-color: #e4e4e4; background: linear-gradient(#d2d2d2, #8b8d8f 50%, #b3b4b5); }
.tray { display: grid; grid-template-columns: repeat(5, 24px); grid-template-rows: 42px 38px; align-items: center; justify-items: center; margin-right: -2px; }
.tray svg { width: 16px; height: 16px; }
.clock { width: 92px; display: flex; flex-direction: column; align-items: center; padding-top: 8px; color: #fff; line-height: 22px; }
.peek { width: 14px; border: 1px solid #6b747d; background: linear-gradient(#a3adb666, #1118); }
```
